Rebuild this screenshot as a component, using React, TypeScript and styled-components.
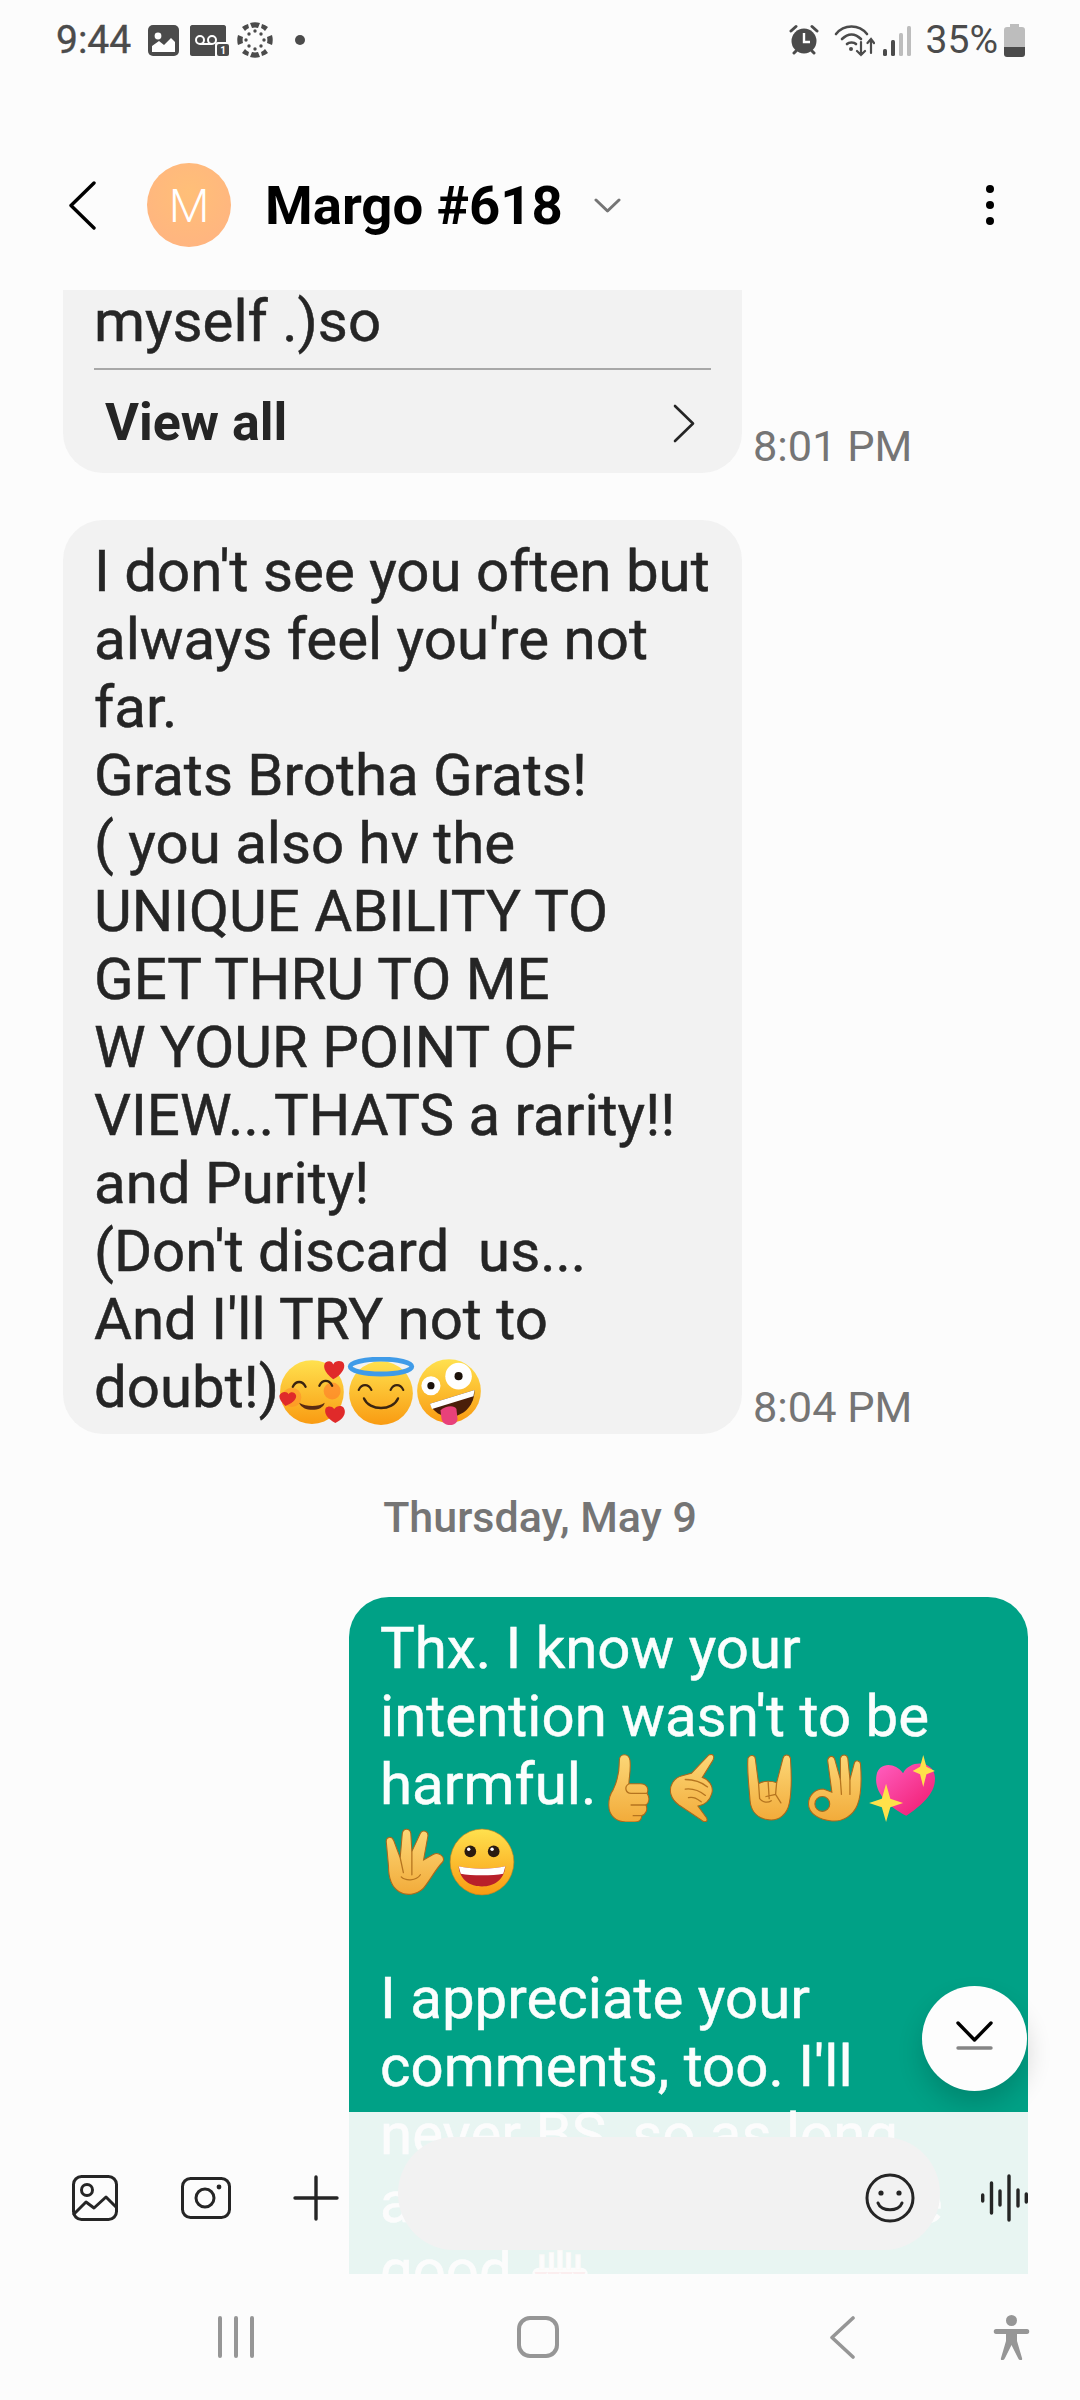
import React from "react";
import styled, { createGlobalStyle } from "styled-components";

const GlobalStyle = createGlobalStyle`
  html, body { margin: 0; padding: 0; background: #fcfcfc; }
  * { box-sizing: border-box; }
`;

const Page = styled.div`
  width: 1080px;
  height: 2400px;
  display: flex;
  flex-direction: column;
  background: #fcfcfc;
  font-family: Roboto, "Liberation Sans", sans-serif;
  overflow: hidden;
`;

const StatusBar = styled.div`
  height: 80px;
  flex: none;
  display: flex;
  align-items: center;
  justify-content: space-between;
  padding: 0 55px 0 56px;
  color: #4b4b4b;
`;

const StatusGroup = styled.div`
  display: flex;
  align-items: center;
  gap: ${(p: { $gap: number }) => p.$gap}px;
`;

const StatusText = styled.span`
  font-size: 39px;
  line-height: 40px;
`;

const Clock = styled(StatusText)`
  margin-right: 6px;
  -webkit-text-stroke: 0.4px currentColor;
`;

const Header = styled.div`
  height: 210px;
  flex: none;
  display: flex;
  align-items: flex-start;
  padding: 83px 0 0 69px;
`;

const BackButton = styled.div`
  width: 78px;
  height: 84px;
  display: flex;
  align-items: center;
`;

const Avatar = styled.div`
  width: 84px;
  height: 84px;
  flex: none;
  border-radius: 50%;
  background: radial-gradient(circle at 50% 35%, #ffbf78, #ffb282);
  color: #fff;
  font-size: 47px;
  font-weight: 300;
  display: flex;
  align-items: center;
  justify-content: center;
`;

const Title = styled.div`
  margin-left: 34px;
  font-size: 54.5px;
  font-weight: 700;
  line-height: 84px;
  color: #000;
`;

const TitleCaret = styled.div`
  margin-left: 31px;
  height: 84px;
  display: flex;
  align-items: center;
`;

const MoreDots = styled.div`
  margin-left: auto;
  margin-right: 86px;
  height: 84px;
  display: flex;
  flex-direction: column;
  align-items: center;
  justify-content: center;
  gap: 8px;
`;

const MoreDot = styled.span`
  width: 8px;
  height: 8px;
  border-radius: 50%;
  background: #000;
`;

const Conversation = styled.div`
  position: relative;
  height: 1984px;
  flex: none;
  overflow: hidden;
`;

const IncomingRow = styled.div`
  display: flex;
  align-items: flex-end;
  padding-left: 63px;
  margin-bottom: ${(p: { $gap: number }) => p.$gap}px;
`;

const Bubble = styled.div`
  width: 679px;
  flex: none;
  padding: 17px 31px 13px;
  border-radius: 40px;
  background: #f2f2f2;
  color: #252525;
  font-size: 58.2px;
  line-height: 68px;
  white-space: pre-wrap;
  -webkit-text-stroke: 0.5px currentColor;
`;

const ClippedBubble = styled(Bubble)`
  padding: 0 31px 0;
  height: 183px;
  border-radius: 0 0 40px 40px;
`;

const ClippedLine = styled.div`
  line-height: 62px;
`;

const BubbleRule = styled.div`
  height: 2px;
  margin-top: 16px;
  background: #a8a8a8;
`;

const ViewAll = styled.div`
  display: flex;
  align-items: center;
  justify-content: space-between;
  padding: 18px 16px 0 11px;
  font-size: 52px;
  font-weight: 700;
  line-height: 70px;
  -webkit-text-stroke: 0;
`;

const Time = styled.div`
  margin: 0 0 1px 11px;
  font-size: 43.3px;
  line-height: 50px;
  color: #757575;
`;

const DateLabel = styled.div`
  margin-top: 53px;
  text-align: center;
  font-size: 43px;
  font-weight: 500;
  line-height: 60px;
  color: #757575;
`;

const OutgoingRow = styled.div`
  display: flex;
  justify-content: flex-end;
  padding-right: 52px;
  margin-top: 50px;
`;

const OutBubble = styled(Bubble)`
  background: #00a186;
  color: #fbfefd;
  height: 900px;
`;

const EmojiLine = styled.div`
  height: 78px;
  padding-top: 9px;
  display: flex;
  align-items: center;
`;

const Glyph = styled.svg`
  width: 68px;
  height: 68px;
  flex: none;
  vertical-align: -4px;
  margin-block: -14px;
  -webkit-text-stroke: 0;
`;

const ComposerVeil = styled.div`
  position: absolute;
  left: 0;
  right: 0;
  bottom: 0;
  height: 162px;
  background: rgba(252, 252, 252, 0.92);
  display: flex;
  align-items: center;
  padding: 10px 52px 0 72px;
`;

const ComposerIcon = styled.svg`
  flex: none;
  color: #252525;
  fill: none;
  stroke: currentColor;
  stroke-linecap: round;
  stroke-linejoin: round;
`;

const InputPill = styled.div`
  width: 542px;
  height: 113px;
  flex: none;
  margin: -10px 13px 0 59px;
  padding: 10px 25px 0 0;
  border-radius: 57px;
  background: #f2f2f2;
  display: flex;
  align-items: center;
  justify-content: flex-end;
`;

const ScrollDown = styled.div`
  position: absolute;
  right: 53px;
  bottom: 183px;
  width: 105px;
  height: 105px;
  border-radius: 50%;
  background: #fdfdfd;
  box-shadow: 0 14px 26px rgba(0, 0, 0, 0.16);
  display: flex;
  align-items: center;
  justify-content: center;
`;

const NavBar = styled.div`
  height: 126px;
  flex: none;
  position: relative;
  display: flex;
  align-items: center;
  padding: 0 52px 0 218px;
  color: #969696;
`;

const NavIcon = styled.svg`
  flex: none;
  fill: none;
  stroke: currentColor;
  stroke-linecap: round;
  stroke-linejoin: round;
  margin-left: ${(p: { $left: number }) => p.$left}px;
`;

type EmojiKind =
  | "thumb" | "shaka" | "rock" | "ok" | "heart" | "spock"
  | "grin" | "hearts" | "halo" | "zany" | "cake";

const skin = { fill: "url(#skin)", stroke: "#a8681c", strokeWidth: 1 };
const crease = { fill: "none", stroke: "#b5741f", strokeWidth: 1.2, strokeLinecap: "round" as const };

function EmojiShape({ kind }: { kind: EmojiKind }) {
  switch (kind) {
    case "thumb":
      return (
        <g>
          <path {...skin} d="M16 34C20 26 22 17 22 6C22 -1 31 -1 32 6C33 15 31 22 31 28L42 28C48 28 50 33 48 37C51 41 50 46 47 48C49 52 47 57 43 58C43 62 40 64 36 64L28 64C19 64 12 58 12 48C12 42 13 38 16 34Z" />
          <path {...crease} d="M31 28C26 31 28 37 33 37L48 37M33 48L47 48M35 58L43 58" />
        </g>
      );
    case "shaka":
      return (
        <g>
          <path {...skin} d="M42 1C46 -1 48 2 46 6L36 22C42 24 47 30 45 37C43 44 38 48 32 49L40 60C42 64 38 65 35 62L14 48C6 42 4 34 8 27C12 20 20 20 26 18Z" />
          <path {...crease} d="M20 24C28 24 36 27 41 31M20 33C28 32 34 35 39 39M23 41C28 40 31 42 35 45" />
        </g>
      );
    case "rock":
      return (
        <g>
          <path {...skin} d="M15 4C17 0 22 1 22 5L25 28C30 25 37 25 42 27L48 4C49 0 54 0 55 4C56 18 56 36 54 46C52 57 44 63 35 62C25 61 18 55 17 44C16 30 14 16 15 4Z" />
          <path {...crease} d="M25 28L26 42C29 46 34 46 37 44M34 26L35 42M42 27L41 38L32 40M41 38L46 46" />
        </g>
      );
    case "ok":
      return (
        <g>
          <path {...skin} d="M26 6C27 1 32 1 33 6L38 24L38 4C39 0 44 0 45 4L47 24L51 9C52 5 57 6 57 10C58 24 58 38 54 48C50 58 40 64 30 63C18 62 8 56 8 47C8 39 14 33 22 33L30 36Z" />
          <circle cx="21" cy="47" r="7" fill="#00a186" stroke="#a8681c" strokeWidth="1" />
          <path {...crease} d="M38 24L39 38M47 24L47 38" />
        </g>
      );
    case "heart":
      return (
        <g>
          <path fill="url(#pink)" d="M36 58C20 50 5 36 8 20C10 8 25 7 33 18C40 5 62 6 63 22C64 38 48 50 36 58Z" />
          <path fill="#ffe14a" d="M52 1L55 12L63 16L55 19L52 31L49 19L42 16L49 12Z" />
          <path fill="#ffe14a" d="M17 28L21 42L33 46L21 50L17 64L13 50L1 46L13 42Z" />
        </g>
      );
    case "spock":
      return (
        <g>
          <path {...skin} d="M6 14C5 8 11 7 13 12L19 28L21 5C22 0 28 0 29 5L30 22L38 5C40 1 46 3 45 8L41 30L50 25C55 22 62 27 59 32C53 38 49 46 43 54C38 62 26 65 18 60C10 55 8 46 8 36Z" />
          <path {...crease} d="M19 28L22 42M30 22L30 44M20 46C24 50 34 50 38 44" />
        </g>
      );
    case "grin":
      return (
        <g>
          <ellipse cx="32" cy="32" rx="30" ry="31" fill="url(#face)" stroke="#c9801a" strokeWidth="0.6" />
          <circle cx="21" cy="22" r="5.5" fill="#2a1a10" />
          <circle cx="43" cy="22" r="5.5" fill="#2a1a10" />
          <circle cx="19.5" cy="20" r="1.6" fill="#fff" />
          <circle cx="41.5" cy="20" r="1.6" fill="#fff" />
          <path fill="#b8202a" d="M10 36C22 39 42 39 54 36C53 49 43 55 32 55C21 55 11 49 10 36Z" />
          <path fill="#fff" d="M10 36C22 39 42 39 54 36L52 43C42 45 22 45 12 43Z" />
        </g>
      );
    case "hearts":
      return (
        <g>
          <circle cx="31" cy="33" r="30" fill="url(#face)" />
          <circle cx="12" cy="38" r="9" fill="#ff8a2a" opacity="0.5" />
          <circle cx="50" cy="32" r="8" fill="#ff7a2a" opacity="0.6" />
          <path fill="none" stroke="#3a2410" strokeWidth="2.2" strokeLinecap="round" d="M13 28C16 22 22 22 25 28M38 27C41 21 47 21 50 27" />
          <path fill="#5a2a12" d="M19 43C26 47 37 47 43 43C41 52 22 52 19 43Z" />
          <path fill="#e02a2a" d="M51 21C42 14 41 8 44 5C47 3 50 4 51 7C53 3 59 3 61 6C63 11 58 17 51 21Z" />
          <path fill="#e02a2a" d="M6 46C0 41 -1 36 2 34C5 32 8 33 9 35C11 32 15 33 16 36C17 40 12 44 6 46Z" />
          <path fill="#e02a2a" d="M53 62C45 58 42 52 44 48C46 46 50 46 52 49C54 46 59 45 61 48C64 53 60 59 53 62Z" />
        </g>
      );
    case "halo":
      return (
        <g>
          <circle cx="32" cy="34" r="30" fill="url(#face)" />
          <path fill="none" stroke="#3a2410" strokeWidth="2" strokeLinecap="round" d="M11 31C14 25 20 25 23 31M41 31C44 25 50 25 53 31" />
          <path fill="none" stroke="#3a2410" strokeWidth="2.2" strokeLinecap="round" d="M16 39C21 51 43 51 48 39" />
          <ellipse cx="32" cy="9" rx="29" ry="7" fill="none" stroke="#3f9be8" strokeWidth="4.5" />
        </g>
      );
    case "zany":
      return (
        <g>
          <circle cx="32" cy="32" r="30" fill="url(#face)" />
          <circle cx="15" cy="27" r="9" fill="#fff" />
          <circle cx="15" cy="27" r="3.4" fill="#1c120a" />
          <circle cx="41" cy="18" r="12.5" fill="#fff" />
          <circle cx="41" cy="18" r="3.8" fill="#1c120a" />
          <path fill="#4a1f0a" d="M14 44L56 31C56 45 47 54 36 56C26 57 18 53 14 44Z" />
          <path fill="#fff" d="M14 44L56 31L55 37L16 49Z" />
          <path fill="#e8417a" d="M24 50C29 46 37 45 39 49L40 58C40 66 26 66 25 58Z" />
        </g>
      );
    default:
      return (
        <g>
          <rect x="6" y="26" width="52" height="36" rx="6" fill="#fff" />
          <path fill="#f04a5a" d="M8 30C12 40 16 40 20 30C24 40 28 40 32 30C36 40 40 40 44 30C48 40 52 40 56 30Z" />
          <path fill="#fff" stroke="#f6d8b8" strokeWidth="1" d="M13 14H17V28H13ZM22 12H26V28H22ZM30 10H34V28H30ZM38 12H42V28H38ZM47 14H51V28H47Z" />
        </g>
      );
  }
}

function Emoji({ kind }: { kind: EmojiKind }) {
  return (
    <Glyph viewBox="0 0 64 64">
      <EmojiShape kind={kind} />
    </Glyph>
  );
}

function EmojiDefs() {
  return (
    <svg width="0" height="0" style={{ position: "absolute" }}>
      <defs>
        <linearGradient id="skin" x1="0" y1="0" x2="0" y2="1">
          <stop offset="0" stopColor="#fcd777" />
          <stop offset="1" stopColor="#f2ab3a" />
        </linearGradient>
        <linearGradient id="face" x1="0" y1="0" x2="0" y2="1">
          <stop offset="0" stopColor="#ffe14e" />
          <stop offset="1" stopColor="#f99b12" />
        </linearGradient>
        <linearGradient id="pink" x1="0" y1="0" x2="1" y2="1">
          <stop offset="0" stopColor="#ff5fc0" />
          <stop offset="1" stopColor="#f0186c" />
        </linearGradient>
      </defs>
    </svg>
  );
}

const ink = "#4b4b4b";

function StatusLeftIcons() {
  return (
    <>
      <svg width="31" height="31" viewBox="0 0 31 31">
        <rect width="31" height="31" rx="5" fill={ink} />
        <circle cx="10" cy="11" r="3.4" fill="#fff" />
        <path fill="#fff" d="M4 27V21L11 16L16 20L23 13L27 17V27Z" />
      </svg>
      <svg width="39" height="31" viewBox="0 0 39 31">
        <path fill={ink} d="M2 0H34C35 0 36 1 36 2V17H28C26 17 25 18 25 20V31H2C1 31 0 30 0 29V2C0 1 1 0 2 0Z" />
        <circle cx="10" cy="15" r="4" fill="none" stroke="#fff" strokeWidth="2" />
        <circle cx="22" cy="15" r="4" fill="none" stroke="#fff" strokeWidth="2" />
        <path stroke="#fff" strokeWidth="2" d="M10 19H22" />
        <rect x="27" y="19" width="12" height="12" rx="2" fill={ink} />
        <text x="33" y="29" fontSize="10" fontWeight="700" fill="#fff" textAnchor="middle" fontFamily="Roboto">1</text>
      </svg>
      <svg width="36" height="36" viewBox="0 0 36 36" fill={ink} style={{ marginLeft: -3 }}>
        <path d="M13 1A18 18 0 0 1 23 1L21 6A12 12 0 0 0 15 6Z" />
        <path d="M13 35A18 18 0 0 0 23 35L21 30A12 12 0 0 1 15 30Z" />
        <path d="M1 13A18 18 0 0 0 1 23L6 21A12 12 0 0 1 6 15Z" />
        <path d="M35 13A18 18 0 0 1 35 23L30 21A12 12 0 0 0 30 15Z" />
        <path d="M5 5A18 18 0 0 1 11 2L12 6A13 13 0 0 0 8 9Z" />
        <path d="M31 5A18 18 0 0 0 25 2L24 6A13 13 0 0 1 28 9Z" />
        <path d="M5 31A18 18 0 0 0 11 34L12 30A13 13 0 0 1 8 27Z" />
        <path d="M31 31A18 18 0 0 1 25 34L24 30A13 13 0 0 0 28 27Z" />
        <circle cx="18" cy="9" r="1.7" /><circle cx="18" cy="27" r="1.7" />
        <circle cx="9" cy="18" r="1.7" /><circle cx="27" cy="18" r="1.7" />
        <circle cx="12" cy="12" r="1.7" /><circle cx="24" cy="12" r="1.7" />
        <circle cx="12" cy="24" r="1.7" /><circle cx="24" cy="24" r="1.7" />
      </svg>
      <svg width="10" height="10" viewBox="0 0 10 10" style={{ marginLeft: 11 }}>
        <circle cx="5" cy="5" r="5" fill={ink} />
      </svg>
    </>
  );
}

function StatusRightIcons() {
  return (
    <>
      <svg width="30" height="32" viewBox="0 0 30 32">
        <circle cx="15" cy="17" r="12.5" fill={ink} />
        <path fill="none" stroke="#fff" strokeWidth="2.4" d="M15 9V18H21" />
        <path fill="none" stroke={ink} strokeWidth="3" strokeLinecap="round" d="M2 7L7 2.5M28 7L23 2.5M5 29L7 27M25 29L23 27" />
      </svg>
      <svg width="41" height="33" viewBox="0 0 41 33" fill="none" stroke={ink} strokeLinecap="round" style={{ marginRight: -7 }}>
        <path strokeWidth="2.6" d="M2 10C10 0 25 0 33 10M8 15C14 9 21 9 27 15M13 20C15 18 20 18 22 20" />
        <circle cx="17" cy="25" r="2" fill={ink} stroke="none" />
        <path strokeWidth="2.2" d="M27 18V31M23 27L27 31L31 27M37 29V15M33.5 19L37 15L40 19" />
      </svg>
      <svg width="28" height="31" viewBox="0 0 28 31">
        <rect x="0" y="24" width="4" height="7" rx="1.5" fill={ink} />
        <rect x="8" y="15" width="4" height="16" rx="1.5" fill={ink} />
        <rect x="16" y="8" width="4" height="23" rx="1.5" fill="#bdbdbd" />
        <rect x="24" y="1" width="4" height="30" rx="1.5" fill="#bdbdbd" />
      </svg>
    </>
  );
}

const messageOne = `I don't see you often but
always feel you're not
far.
Grats Brotha Grats!
( you also hv the
UNIQUE ABILITY TO
GET THRU TO ME
W YOUR POINT OF
VIEW...THATS a rarity!!
and Purity!
(Don't discard  us...
And I'll TRY not to
doubt!)`;

export default function App() {
  return (
    <Page>
      <GlobalStyle />
      <EmojiDefs />
      <StatusBar>
        <StatusGroup $gap={11}>
          <Clock>9:44</Clock>
          <StatusLeftIcons />
        </StatusGroup>
        <StatusGroup $gap={15}>
          <StatusRightIcons />
          <StatusGroup $gap={6}>
            <StatusText>35%</StatusText>
            <svg width="21" height="33" viewBox="0 0 21 33">
              <path fill="#bdbdbd" d="M6 0H15V3H18C20 3 21 4 21 6V23H0V6C0 4 1 3 3 3H6Z" />
              <path fill={ink} d="M0 23H21V30C21 32 20 33 18 33H3C1 33 0 32 0 30Z" />
            </svg>
          </StatusGroup>
        </StatusGroup>
      </StatusBar>

      <Header>
        <BackButton>
          <svg width="27" height="49" viewBox="0 0 27 49" fill="none" stroke="#000" strokeWidth="3.4" strokeLinecap="round" strokeLinejoin="round">
            <path d="M25 2L2 24.5L25 47" />
          </svg>
        </BackButton>
        <Avatar>M</Avatar>
        <Title>Margo #618</Title>
        <TitleCaret>
          <svg width="27" height="15" viewBox="0 0 27 15" fill="none" stroke="#757575" strokeWidth="3" strokeLinecap="round" strokeLinejoin="round">
            <path d="M2 2L13.5 13L25 2" />
          </svg>
        </TitleCaret>
        <MoreDots>
          <MoreDot /><MoreDot /><MoreDot />
        </MoreDots>
      </Header>

      <Conversation>
        <IncomingRow $gap={47}>
          <ClippedBubble>
            <ClippedLine>myself .)so</ClippedLine>
            <BubbleRule />
            <ViewAll>
              View all
              <svg width="22" height="39" viewBox="0 0 22 39" fill="none" stroke="#252525" strokeWidth="2.6" strokeLinecap="round" strokeLinejoin="round">
                <path d="M2 2L20 19.5L2 37" />
              </svg>
            </ViewAll>
          </ClippedBubble>
          <Time>8:01 PM</Time>
        </IncomingRow>

        <IncomingRow $gap={0}>
          <Bubble>
            {messageOne}
            <Emoji kind="hearts" />
            <Emoji kind="halo" />
            <Emoji kind="zany" />
          </Bubble>
          <Time>8:04 PM</Time>
        </IncomingRow>

        <DateLabel>Thursday, May 9</DateLabel>

        <OutgoingRow>
          <OutBubble>
            {"Thx. I know your\nintention wasn't to be\nharmful."}
            <Emoji kind="thumb" />
            <Emoji kind="shaka" />
            <Emoji kind="rock" />
            <Emoji kind="ok" />
            <Emoji kind="heart" />
            <EmojiLine>
              <Emoji kind="spock" />
              <Emoji kind="grin" />
            </EmojiLine>
            {"\nI appreciate your\ncomments, too. I'll\nnever BS, so as long\nas we're honest, we're\ngood "}
            <Emoji kind="cake" />
          </OutBubble>
        </OutgoingRow>

        <ScrollDown>
          <svg width="37" height="36" viewBox="0 0 37 36" fill="none" strokeLinecap="round" strokeLinejoin="round">
            <path stroke="#000" strokeWidth="3.4" d="M2 2L18.5 19L35 2" />
            <path stroke="#858585" strokeWidth="3.4" d="M2 27H35" />
          </svg>
        </ScrollDown>

        <ComposerVeil>
          <ComposerIcon width="46" height="46" viewBox="0 0 46 46" strokeWidth="3">
            <rect x="1.5" y="1.5" width="43" height="43" rx="8" />
            <circle cx="15" cy="15" r="5.5" />
            <path d="M2 39L14 27L22 33L34 22L44 32" />
          </ComposerIcon>
          <ComposerIcon width="50" height="42" viewBox="0 0 50 42" strokeWidth="3" style={{ marginLeft: 63 }}>
            <rect x="1.5" y="1.5" width="47" height="39" rx="8" />
            <circle cx="24" cy="21" r="9" />
            <circle cx="38" cy="10" r="2.4" fill="currentColor" stroke="none" />
          </ComposerIcon>
          <ComposerIcon width="46" height="46" viewBox="0 0 46 46" strokeWidth="3.4" style={{ marginLeft: 62 }}>
            <path d="M23 2V44M2 23H44" />
          </ComposerIcon>
          <InputPill>
            <ComposerIcon width="50" height="50" viewBox="0 0 50 50" strokeWidth="3">
              <circle cx="25" cy="25" r="23" />
              <circle cx="16" cy="20" r="2.6" fill="currentColor" stroke="none" />
              <circle cx="34" cy="20" r="2.6" fill="currentColor" stroke="none" />
              <path d="M13 30C16 39 34 39 37 30" />
            </ComposerIcon>
          </InputPill>
          <ComposerIcon width="47" height="48" viewBox="0 0 47 48" strokeWidth="3.4" style={{ marginLeft: 28 }}>
            <path d="M1.7 21V27M10.5 9V39M19 17V31M28 2V46M37 16V32M45.3 20V28" />
          </ComposerIcon>
        </ComposerVeil>
      </Conversation>

      <NavBar>
        <NavIcon $left={0} width="36" height="42" viewBox="0 0 36 42" strokeWidth="4">
          <path d="M2 2V40M18 2V40M34 2V40" />
        </NavIcon>
        <NavIcon $left={263} width="42" height="42" viewBox="0 0 42 42" strokeWidth="4">
          <rect x="2" y="2" width="38" height="38" rx="11" />
        </NavIcon>
        <NavIcon $left={271} width="25" height="43" viewBox="0 0 25 43" strokeWidth="3.6">
          <path d="M23 2L2 21.5L23 41" />
        </NavIcon>
        <NavIcon $left={138} width="37" height="45" viewBox="0 0 37 45" strokeWidth="0" fill="currentColor" style={{ fill: "#969696" }}>
          <circle cx="18.5" cy="5.5" r="5.5" />
          <path d="M3 14H34C37 14 37 19 34 19H24V26L29 43C30 46 26 46 25 43L18.5 30L12 43C11 46 7 46 8 43L13 26V19H3C0 19 0 14 3 14Z" />
        </NavIcon>
      </NavBar>
    </Page>
  );
}
